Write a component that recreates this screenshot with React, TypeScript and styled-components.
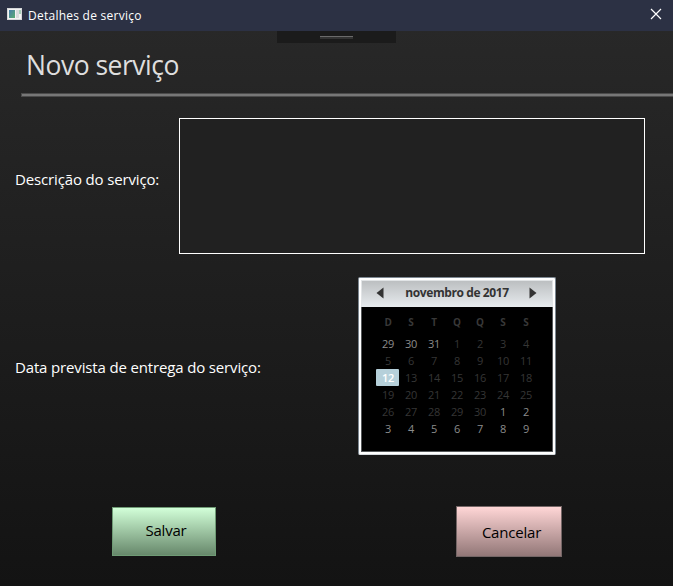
import React from "react";
import styled, { createGlobalStyle } from "styled-components";

const GlobalStyle = createGlobalStyle`
  * { box-sizing: border-box; }
  body { margin: 0; overflow: hidden; font-family: "Open Sans", "Noto Sans", sans-serif; }
  button { font-family: inherit; padding: 0; }
`;

const Window = styled.div`
  position: relative;
  width: 673px;
  height: 586px;
  display: flex;
  flex-direction: column;
  color: #fff;
  background: linear-gradient(#292929, #131313);
`;

const TitleBar = styled.header`
  height: 31px;
  flex: none;
  display: flex;
  align-items: center;
  padding: 0 11px 0 7px;
  background: #2c3144;
`;

const Text = styled.span<{ $size: number; $spacing?: number }>`
  font-size: ${(p) => p.$size}px;
  letter-spacing: ${(p) => p.$spacing ?? 0}px;
  line-height: 1.36;
  white-space: nowrap;
`;

const WindowTitle = styled(Text)`
  flex: 1;
  margin-left: 6px;
  padding-top: 1px;
`;

const IconSlot = styled.span`
  display: flex;
  margin-bottom: 4px;
`;

const CloseButton = styled.button`
  display: flex;
  border: 0;
  background: none;
  margin-top: -3px;
`;

const DebugHandle = styled.div`
  position: absolute;
  top: 31px;
  left: 277px;
  width: 119px;
  height: 12px;
  background: #1b1b1b;
  display: flex;
  justify-content: center;
  padding-top: 5px;
`;

const Grip = styled.div`
  width: 33px;
  height: 3px;
  background: #333;
  border-top: 1px solid #6b6b6b;
`;

const Heading = styled.h1`
  height: 62px;
  flex: none;
  display: flex;
  align-items: center;
  margin: 0 0 0 21px;
  padding: 7px 0 0 5px;
  color: #dedede;
  font-weight: 400;
`;

const Divider = styled.div`
  height: 4px;
  flex: none;
  margin-left: 21px;
  background: #777;
  border: 1px solid #4b4b4b;
  border-right: 0;
`;

const Row = styled.div<{ $height: number; $top: number }>`
  display: flex;
  align-items: center;
  height: ${(p) => p.$height}px;
  margin-top: ${(p) => p.$top}px;
  padding-left: 15px;
`;

const Label = styled.label<{ $width: number; $lift?: number; $drop?: number }>`
  display: flex;
  width: ${(p) => p.$width}px;
  padding-top: ${(p) => p.$drop ?? 0}px;
  padding-bottom: ${(p) => p.$lift ?? 0}px;
  flex: none;
`;

const Description = styled.textarea`
  width: 466px;
  height: 136px;
  resize: none;
  outline: 0;
  border: 1px solid #fff;
  background: #212121;
  color: #fff;
`;

const Calendar = styled.section`
  width: 198px;
  height: 178px;
  border: 1px solid #7c8791;
  border-bottom-color: #d7dbdf;
  border-radius: 2px;
  background: #fff;
  padding: 2px;
  display: flex;
  flex-direction: column;
`;

const MonthBar = styled.div`
  height: 27px;
  display: flex;
  align-items: center;
  justify-content: space-between;
  padding: 0 15px 2px 14px;
  color: #333;
  font-weight: 700;
  background: linear-gradient(#bcbfc1, #e7ebee);
  border: 1px solid #e1e4e6;
  border-bottom: 0;
`;

const MonthName = styled(Text)`
  padding-left: 1px;
`;

const MonthButton = styled.button`
  border: 0;
  background: none;
  display: flex;
`;

const Days = styled.div`
  flex: 1;
  background: #000;
  border: 1px solid #55585a;
  border-top: 0;
  padding: 6px 0 0 14px;
  display: grid;
  align-content: start;
  grid-template-columns: repeat(7, 23px);
  grid-template-rows: 22px repeat(6, 17px);
  font-size: 11px;
  letter-spacing: -0.2px;
`;

const Weekday = styled.span`
  display: flex;
  align-items: center;
  justify-content: center;
  padding: 0 0 4px 1px;
  color: #383838;
  font-size: 10px;
  font-weight: 700;
`;

const Day = styled.span<{ $kind: string }>`
  display: flex;
  align-items: center;
  justify-content: center;
  height: 17px;
  padding-left: 1px;
  border-radius: 1px;
  color: ${(p) => (p.$kind === "outside" ? "#8c8c8c" : p.$kind === "selected" ? "#fff" : "#363636")};
  background: ${(p) => (p.$kind === "selected" ? "#b6d0da" : "transparent")};
  font-weight: ${(p) => (p.$kind === "selected" ? 600 : 400)};
`;

const Actions = styled.footer`
  display: flex;
  align-items: flex-start;
  margin-top: 51px;
  padding-left: 112px;
  gap: 240px;
`;

const ActionButton = styled.button<{ $kind: "save" | "cancel" }>`
  display: flex;
  align-items: center;
  justify-content: center;
  color: #000;
  width: ${(p) => (p.$kind === "save" ? 104 : 106)}px;
  height: ${(p) => (p.$kind === "save" ? 49 : 51)}px;
  margin-top: ${(p) => (p.$kind === "save" ? 1 : 0)}px;
  padding-left: ${(p) => (p.$kind === "save" ? 4 : 5)}px;
  padding-top: ${(p) => (p.$kind === "save" ? 0 : 1)}px;
  padding-bottom: ${(p) => (p.$kind === "save" ? 2 : 0)}px;
  border: 1px solid ${(p) => (p.$kind === "save" ? "#6f9b75" : "#746666")};
  background: ${(p) =>
    p.$kind === "save" ? "linear-gradient(#d2ffd8, #67886b)" : "linear-gradient(#ffd6d6, #927777)"};
`;

const weekdays = ["D", "S", "T", "Q", "Q", "S", "S"];
const days = [
  ...[29, 30, 31].map((n) => ({ n, kind: "outside" })),
  ...Array.from({ length: 30 }, (_, i) => ({ n: i + 1, kind: i === 11 ? "selected" : "normal" })),
  ...Array.from({ length: 9 }, (_, i) => ({ n: i + 1, kind: "outside" })),
];

const AppIcon = () => (
  <svg width="15" height="12" viewBox="0 0 15 12">
    <defs>
      <linearGradient id="pane" x1="0" y1="0" x2="1" y2="1">
        <stop offset="0" stopColor="#477cab" />
        <stop offset="1" stopColor="#58ad70" />
      </linearGradient>
    </defs>
    <rect width="15" height="12" fill="#d5d8d9" />
    <rect x="1" y="1" width="13" height="10" fill="#f3f3f3" />
    <rect x="2" y="2" width="6" height="8" fill="url(#pane)" />
    <rect x="9" y="2" width="3" height="8" fill="#d9dcde" />
    <rect x="12" y="2" width="2" height="4" fill="#a5cfb8" />
  </svg>
);

export default function App() {
  return (
    <Window>
      <GlobalStyle />
      <TitleBar>
        <IconSlot>
          <AppIcon />
        </IconSlot>
        <WindowTitle $size={12} $spacing={0.25}>Detalhes de serviço</WindowTitle>
        <CloseButton aria-label="Fechar">
          <svg width="12" height="12" viewBox="0 0 12 12" stroke="#fff" strokeWidth="1.2">
            <path d="M1 1 11 11M11 1 1 11" />
          </svg>
        </CloseButton>
      </TitleBar>
      <DebugHandle>
        <Grip />
      </DebugHandle>
      <Heading>
        <Text $size={26.5} $spacing={-0.5}>Novo serviço</Text>
      </Heading>
      <Divider />
      <Row $height={136} $top={21}>
        <Label $width={164} $lift={14}>
          <Text $size={15} $spacing={-0.15}>Descrição do serviço:</Text>
        </Label>
        <Description />
      </Row>
      <Row $height={178} $top={23}>
        <Label $width={343} $drop={2}>
          <Text $size={15} $spacing={-0.15}>Data prevista de entrega do serviço:</Text>
        </Label>
        <Calendar>
          <MonthBar>
            <MonthButton aria-label="Mês anterior">
              <svg width="8" height="12" viewBox="0 0 8 12"><path d="M7.5 .5v11L.5 6Z" fill="#333" /></svg>
            </MonthButton>
            <MonthName $size={12} $spacing={-0.4}>novembro de 2017</MonthName>
            <MonthButton aria-label="Próximo mês">
              <svg width="8" height="12" viewBox="0 0 8 12"><path d="M.5 .5v11L7.5 6Z" fill="#333" /></svg>
            </MonthButton>
          </MonthBar>
          <Days>
            {weekdays.map((d, i) => (
              <Weekday key={i}>{d}</Weekday>
            ))}
            {days.map((d, i) => (
              <Day key={i} $kind={d.kind}>{d.n}</Day>
            ))}
          </Days>
        </Calendar>
      </Row>
      <Actions>
        <ActionButton $kind="save">
          <Text $size={15} $spacing={-0.2}>Salvar</Text>
        </ActionButton>
        <ActionButton $kind="cancel">
          <Text $size={15} $spacing={-0.2}>Cancelar</Text>
        </ActionButton>
      </Actions>
    </Window>
  );
}
